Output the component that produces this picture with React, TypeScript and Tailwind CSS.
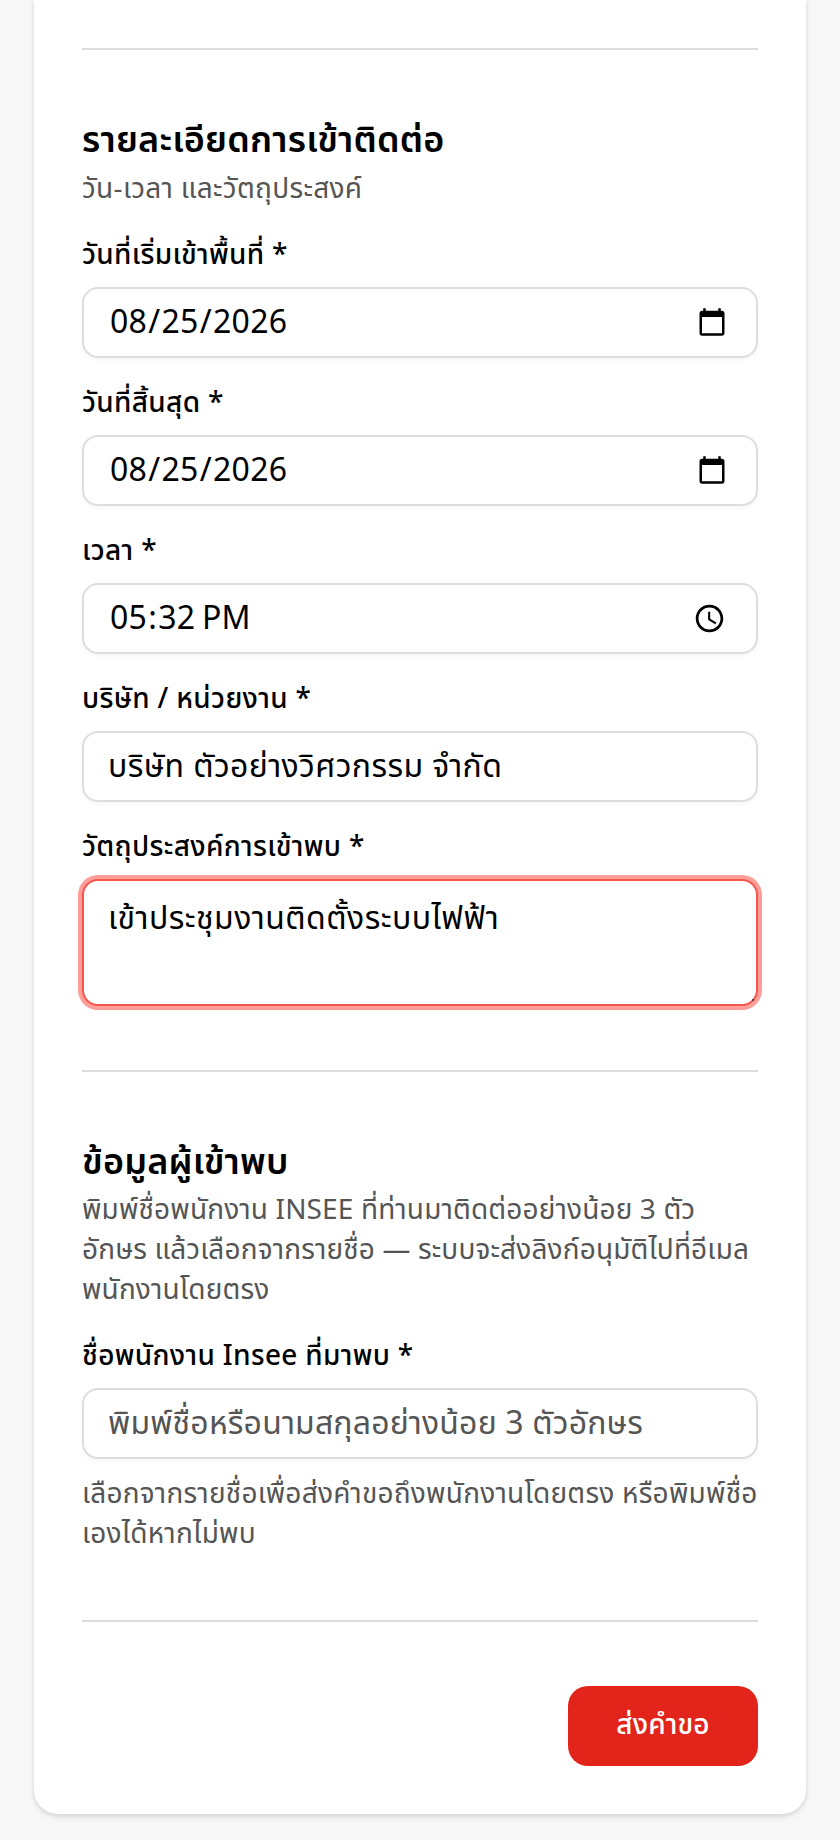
const inputClass =
  "block h-[71px] w-full rounded-[16px] border-2 border-[#dddddd] bg-white px-[24px] text-[32px] tracking-[0.012em] text-black shadow-[0_2px_4px_rgba(0,0,0,0.04)] outline-none placeholder:tracking-[0.005em] placeholder:text-[#555555]";

const nativeClass =
  "block h-[71px] w-full rounded-[16px] border-2 border-[#dddddd] bg-white pl-[25px] pr-[26px] text-[32px] tracking-[0.01em] text-black shadow-[0_2px_4px_rgba(0,0,0,0.04)] outline-none";

function Label({ children }: { children: string }) {
  return (
    <label className="mb-[11px] block text-[28px] font-medium leading-[40px] tracking-[0.012em] text-black">
      {children}
    </label>
  );
}

export default function App() {
  return (
    <div className="min-h-[1840px] bg-[#f8f8f8] px-[34px] pb-[26px] font-['Noto_Sans_Thai','Noto_Sans',sans-serif]">
      <div className="rounded-b-[24px] bg-white px-[48px] pb-[48px] pt-[48px] shadow-[0_2px_5px_rgba(0,0,0,0.14),0_4px_16px_rgba(0,0,0,0.03)]">
        <hr className="border-t-2 border-[#dddddd]" />

        <section className="mt-[66px]">
          <h2 className="text-[36px] font-semibold leading-[50px] tracking-[0.005em] text-black">
            รายละเอียดการเข้าติดต่อ
          </h2>
          <p className="mt-[4px] text-[28px] leading-[40px] tracking-[0.011em] text-[#555555]">
            วัน-เวลา และวัตถุประสงค์
          </p>

          <div className="mt-[26px] flex flex-col gap-[26px]">
            <div>
              <Label>วันที่เริ่มเข้าพื้นที่ *</Label>
              <input type="date" defaultValue="2026-08-25" className={nativeClass} />
            </div>
            <div>
              <Label>วันที่สิ้นสุด *</Label>
              <input type="date" defaultValue="2026-08-25" className={nativeClass} />
            </div>
            <div>
              <Label>เวลา *</Label>
              <input type="time" defaultValue="17:32" className={nativeClass} />
            </div>
            <div>
              <Label>บริษัท / หน่วยงาน *</Label>
              <input
                type="text"
                defaultValue="บริษัท ตัวอย่างวิศวกรรม จำกัด"
                className={inputClass}
              />
            </div>
            <div>
              <Label>วัตถุประสงค์การเข้าพบ *</Label>
              <div className="relative">
                <textarea
                  defaultValue="เข้าประชุมงานติดตั้งระบบไฟฟ้า"
                  className="block h-[127px] w-full resize-none rounded-[16px] border-2 border-[#f4554d] bg-white px-[24px] py-[16px] text-[32px] leading-[44px] tracking-[0.014em] text-black shadow-[0_0_0_4px_rgba(255,60,50,0.5)] outline-none"
                />
                <span className="absolute bottom-[5px] right-[4px] size-[2px] bg-[#444444]" />
              </div>
            </div>
          </div>
        </section>

        <hr className="mt-[64px] border-t-2 border-[#dddddd]" />

        <section className="mt-[66px]">
          <h2 className="text-[36px] font-semibold leading-[50px] tracking-[0.005em] text-black">
            ข้อมูลผู้เข้าพบ
          </h2>
          <p className="mt-[3px] text-[28px] leading-[40px] tracking-[0.005em] text-[#555555]">
            พิมพ์ชื่อพนักงาน INSEE ที่ท่านมาติดต่ออย่างน้อย 3 ตัว
            <br />
            อักษร แล้วเลือกจากรายชื่อ — ระบบจะส่งลิงก์อนุมัติไปที่อีเมล
            <br />
            พนักงานโดยตรง
          </p>
          <div className="mt-[26px]">
            <Label>ชื่อพนักงาน Insee ที่มาพบ *</Label>
            <input
              type="text"
              placeholder="พิมพ์ชื่อหรือนามสกุลอย่างน้อย 3 ตัวอักษร"
              className={inputClass}
            />
            <p className="mt-[16px] text-[28px] leading-[40px] tracking-[0.008em] text-[#555555]">
              เลือกจากรายชื่อเพื่อส่งคำขอถึงพนักงานโดยตรง หรือพิมพ์ชื่อเองได้หากไม่พบ
            </p>
          </div>
        </section>

        <hr className="mt-[65px] border-t-2 border-[#dddddd]" />

        <div className="mt-[64px] flex justify-end">
          <button
            type="button"
            className="h-[80px] w-[190px] rounded-[20px] bg-[#e3241b] text-[28px] font-medium tracking-[0.005em] text-white"
          >
            ส่งคำขอ
          </button>
        </div>
      </div>
    </div>
  );
}
